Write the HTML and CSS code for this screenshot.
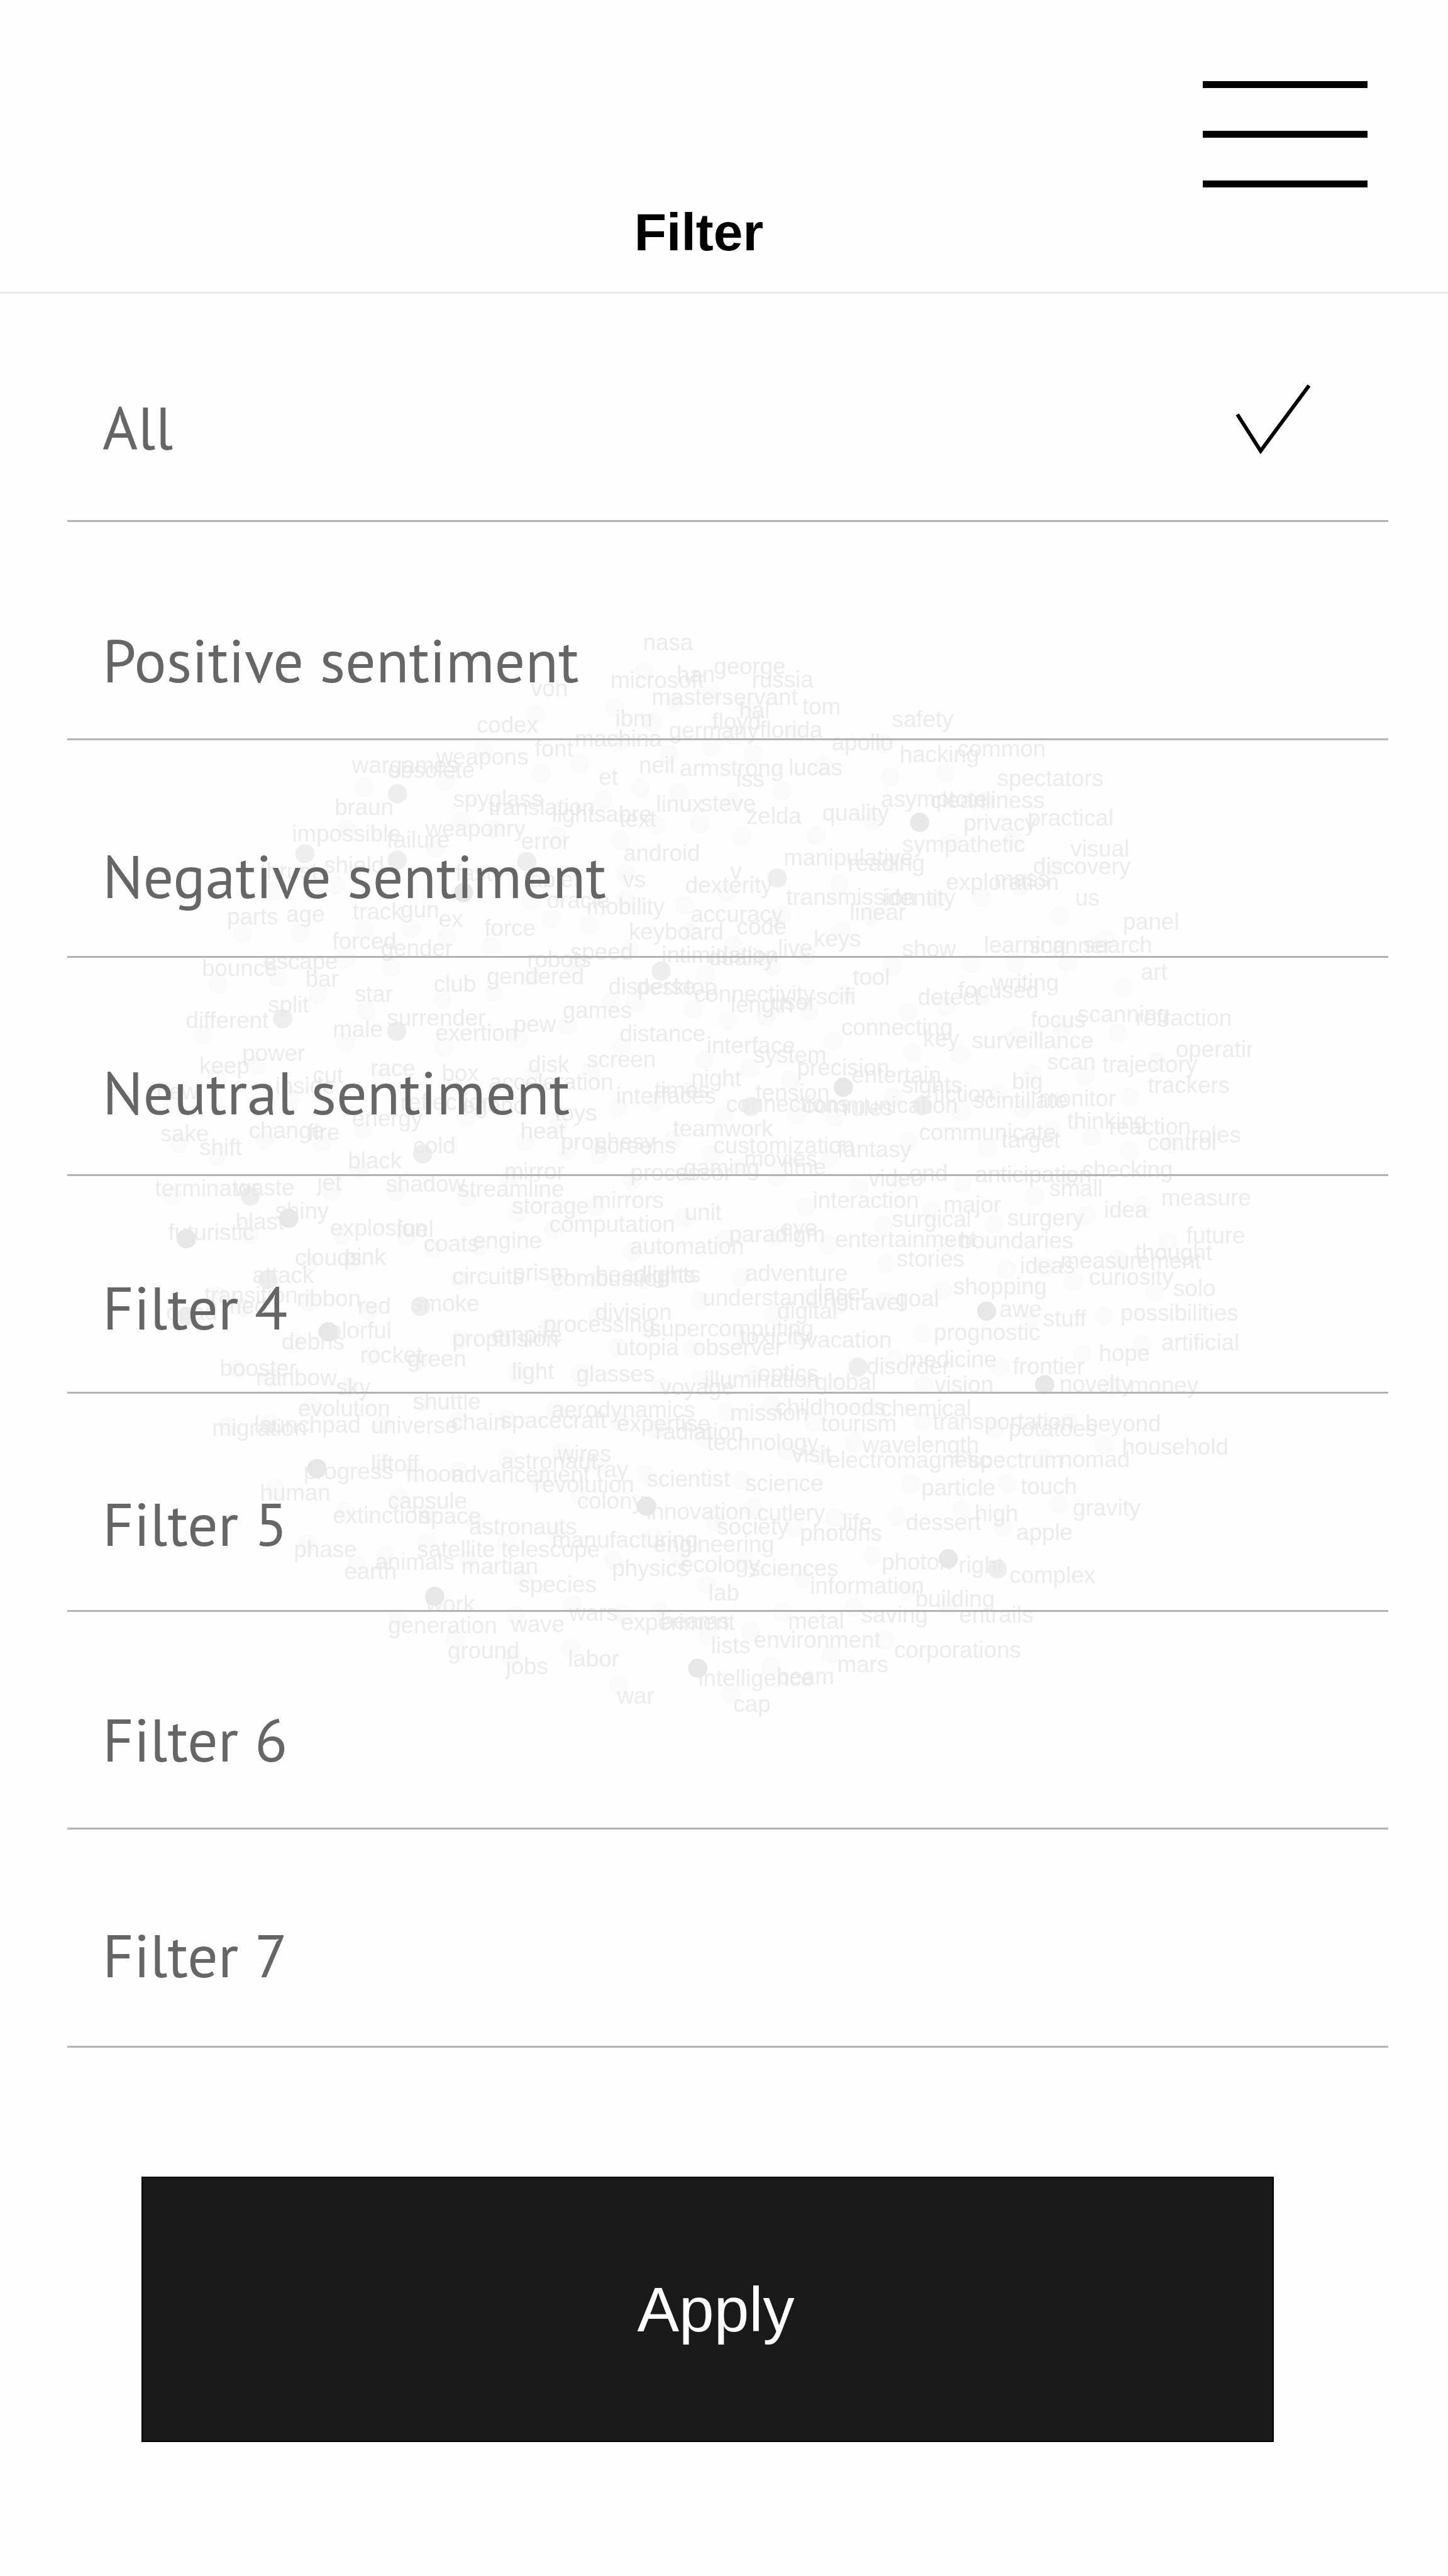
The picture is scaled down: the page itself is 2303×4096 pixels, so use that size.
FILE: index.html
```html
<!DOCTYPE html>
<html lang="en">
<head>
<meta charset="utf-8">
<meta name="viewport" content="width=device-width, initial-scale=1">
<title>Filter</title>
<link rel="stylesheet" href="styles.css">
</head>
<body>
<div class="screen">
  <svg class="cloud" viewBox="0 0 4614 4610" aria-hidden="true"></svg>

  <header class="header">
    <button class="menu" type="button" aria-label="Menu">
      <span class="menu-bar"></span>
      <span class="menu-bar"></span>
      <span class="menu-bar"></span>
    </button>
    <h1 class="title">Filter</h1>
  </header>

  <form class="filters">
    <div class="options">
      <label class="option"><span class="option-name">All</span><span class="mark"><input class="mark-input" type="radio" name="filter" checked><svg class="tick" viewBox="0 0 120 112" aria-hidden="true"><path d="M3 48 40 106 117 2"/></svg></span></label>
      <label class="option"><span class="option-name">Positive sentiment</span><span class="mark"><input class="mark-input" type="radio" name="filter"><svg class="tick" viewBox="0 0 120 112" aria-hidden="true"><path d="M3 48 40 106 117 2"/></svg></span></label>
      <label class="option"><span class="option-name">Negative sentiment</span><span class="mark"><input class="mark-input" type="radio" name="filter"><svg class="tick" viewBox="0 0 120 112" aria-hidden="true"><path d="M3 48 40 106 117 2"/></svg></span></label>
      <label class="option"><span class="option-name">Neutral sentiment</span><span class="mark"><input class="mark-input" type="radio" name="filter"><svg class="tick" viewBox="0 0 120 112" aria-hidden="true"><path d="M3 48 40 106 117 2"/></svg></span></label>
      <label class="option"><span class="option-name">Filter 4</span><span class="mark"><input class="mark-input" type="radio" name="filter"><svg class="tick" viewBox="0 0 120 112" aria-hidden="true"><path d="M3 48 40 106 117 2"/></svg></span></label>
      <label class="option"><span class="option-name">Filter 5</span><span class="mark"><input class="mark-input" type="radio" name="filter"><svg class="tick" viewBox="0 0 120 112" aria-hidden="true"><path d="M3 48 40 106 117 2"/></svg></span></label>
      <label class="option"><span class="option-name">Filter 6</span><span class="mark"><input class="mark-input" type="radio" name="filter"><svg class="tick" viewBox="0 0 120 112" aria-hidden="true"><path d="M3 48 40 106 117 2"/></svg></span></label>
      <label class="option"><span class="option-name">Filter 7</span><span class="mark"><input class="mark-input" type="radio" name="filter"><svg class="tick" viewBox="0 0 120 112" aria-hidden="true"><path d="M3 48 40 106 117 2"/></svg></span></label>
    </div>
    <button class="apply" type="button">Apply</button>
  </form>
</div>
<script src="cloud.js"></script>
</body>
</html>
```

FILE: styles.css
```css
* {
  box-sizing: border-box;
}

body {
  margin: 0;
  background: #fefefe;
  font-family: "Liberation Sans", Arial, sans-serif;
}

.screen {
  position: relative;
  min-height: 100vh;
}

/* Word cloud lying behind the list */
.cloud {
  position: absolute;
  z-index: 0;
  top: 984px;
  left: 9.9%;
  width: 76.6%;
  overflow: hidden;
  pointer-events: none;
}

.cloud-word {
  fill: #e8e8e8;
  fill-opacity: 0.8;
  font-family: "Liberation Sans", Arial, sans-serif;
  font-size: 96px;
}

.cloud-dot { fill: #fafafa; }
.cloud-dot.mid { fill: #eeeeee; }
.cloud-dot.dark { fill: #e7e7e7; }

.header {
  position: relative;
  display: flex;
  flex-direction: column;
  height: 467px;
  padding-top: 129px;
  border-bottom: 3px solid #e6e6e6;
}

.menu {
  display: flex;
  flex-direction: column;
  align-self: flex-end;
  gap: 68px;
  width: 262px;
  margin-right: 128px;
  padding: 0;
  border: 0;
  background: none;
}

.menu-bar {
  height: 11px;
  background: #000;
}

.title {
  margin: 23px 80px 0 0;
  color: #000;
  font-size: 84px;
  font-weight: 700;
  line-height: 96px;
  text-align: center;
}

.filters {
  position: relative;
  z-index: 1;
}

.options {
  display: flex;
  flex-direction: column;
  margin: 0 95px 0 107px;
}

.option {
  --lift: 65px;
  display: flex;
  align-items: flex-end;
  justify-content: space-between;
  height: 346px;
  padding: 0 123px var(--lift) 56px;
  border-bottom: 3px solid #b3b3b3;
}

.option:nth-child(even) { height: 347px; }
.option:nth-child(1) { --lift: 88px; height: 363px; }
.option:nth-child(3) { --lift: 68px; }
.option:nth-child(4) { --lift: 71px; }
.option:nth-child(5) { --lift: 75px; }
.option:nth-child(6) { --lift: 78px; }
.option:nth-child(7) { --lift: 81px; }
.option:nth-child(8) { --lift: 85px; }

.option-name {
  color: #666;
  font-family: "PT Sans", Lato, sans-serif;
  font-size: 96px;
  line-height: 120px;
}

.mark {
  display: grid;
  width: 120px;
  height: 112px;
  margin-bottom: 16px;
}

.mark-input,
.tick {
  grid-area: 1 / 1;
  width: 120px;
  height: 112px;
  margin: 0;
}

.mark-input {
  appearance: none;
}

.tick {
  visibility: hidden;
  fill: none;
  stroke: #000;
  stroke-width: 6;
}

.mark-input:checked + .tick {
  visibility: visible;
}

.apply {
  display: block;
  width: 78.2%;
  height: 422px;
  margin: 205px 0 213px 225px;
  padding: 0 0 0 26px;
  border: 2px solid #000;
  background: #1a1a1a;
  color: #fff;
  font-family: inherit;
  font-size: 100px;
  text-align: center;
}
```

FILE: cloud.js
```js
// Word cloud data, in sectors. Each sector: origin, words (name x y), dots (x y).
const sectors = [
  { at: [0, 0],
    words: "codex 1388 474,weapons 1220 607,wargames 870 640,obsolete 1018 662,braun 797 817,spyglass 1290 783,translation 1437 817,impossible 620 925,failure 1015 952,weaponry 1175 905,shield 753 1057,thrust 487 1083,fast 1300 1090,parts 350 1270,age 596 1261,track 873 1249,gun 1072 1242,ex 1230 1282,force 1420 1318,forced 788 1373,gender 990 1403,bounce 245 1485,escape 502 1457,bar 676 1529,club 1210 1550,gendered 1430 1519",
    light: "1416 545,918 700,1256 676,843 873,1323 843,1461 876,1214 957,800 1108,541 1130,412 1309,652 1307,919 1294,1113 1288,1262 1324,1447 1360,839 1415,1031 1448,562 1492,311 1520",
    mid: "1057 727,672 977,1056 1004",
    dark: "1332 1138" },
  { at: [1568, 0],
    words: "nasa 512 132,microsoft 377 289,han 652 265,george 807 229,russia 965 286,von 45 322,masterservant 548 358,hal 912 414,tom 1175 398,ibm 397 446,floyd 800 460,germany 620 497,florida 998 494,machina 228 531,apollo 1297 547,font 62 573,neil 495 640,armstrong 665 655,iss 900 698,lucas 1118 652,et 328 690,linux 567 803,steve 753 800,lightsabre 133 844,text 413 867,zelda 942 852,quality 1258 839,error 5 956,android 430 1008,v 875 1083,manipulative 1097 1025,reading 1365 1048,dexterity 688 1141,vs 428 1118,tablet 15 1117,transmission 1108 1190,identity 1508 1192,linear 1372 1253,oracle 112 1204,mobility 277 1228,accuracy 710 1261,code 902 1312,keyboard 453 1333,keys 1222 1362,live 1073 1402,speed 210 1418,intimidation 590 1430,duality 785 1441,robots 30 1450,tool 1385 1522,asymptote 1502 782",
    light: "515 218,797 312,391 370,642 348,550 431,942 368,64 397,1147 475,892 486,407 515,618 565,791 532,969 564,1513 522,245 601,87 643,1262 612,1540 658,498 704,660 721,1089 715,881 761,343 754,746 853,564 859,1465 841,151 903,923 904,1229 901,418 923,437 1060,860 1135,1327 1104,436 1168,685 1192,43 1170,1085 1234,1461 1235,130 1248,288 1273,705 1302,1336 1297,455 1373,884 1358,1190 1400,1048 1443,772 1479,222 1450,50 1485,1547 1445",
    mid: "27 1010,1069 1078,586 1465",
    dark: "" },
  { at: [3073, 0],
    words: "safety 43 450,hacking 75 596,common 315 574,spectators 480 695,cleanliness 203 788,privacy 340 881,practical 607 860,sympathetic 85 971,visual 785 989,discovery 630 1063,mass 468 1114,exploration 268 1126,us 805 1192,panel 1003 1293,learning 425 1390,scanner 613 1392,search 838 1389,show 85 1404,art 1077 1500,writing 460 1545",
    light: "264 642,431 757,289 931,551 916,45 1022,723 1038,573 1110,413 1158,224 1168,737 1237,928 1334,371 1432,554 1432,773 1424,1003 1534",
    mid: "",
    dark: "156 846" },
  { at: [0, 1505],
    words: "star 880 88,split 520 132,different 178 197,surrender 1015 186,male 790 234,exertion 1217 250,power 413 334,keep 235 386,race 947 397,cut 706 424,box 1243 418,inside 550 469,new 55 492,acceleration 1440 453,reflection 1072 538,legend 1307 550,energy 870 607,sake 72 668,change 440 655,fire 685 662,shift 235 727,cold 1125 717,black 853 780,mirror 1503 826,shadow 1010 877,jet 725 872,terminator 50 896,waste 380 894,streamline 1310 899,shiny 550 989,blast 385 1035,futuristic 105 1080,storage 1535 968,explosion 778 1060,fuel 1055 1067,coats 1168 1126,engine 1372 1112,clouds 632 1183,pink 835 1181,attack 455 1258,circuits 1287 1261,transition 255 1341,ribbon 640 1355,red 893 1385,smoke 1117 1375,dead 97 1412,med 331 1385,colorful 725 1486,debris 577 1533,propulsion 1287 1520,empire 1452 1506",
    light: "726 58,928 122,1244 78,1458 47,248 225,840 257,1251 275,1560 240,474 354,305 405,990 413,610 485,120 510,1280 450,1340 570,915 620,146 676,504 663,742 672,305 731,900 783,123 896,783 874,1049 877,1343 902,1525 820,1555 965,445 1058,828 1058,1094 1062,1204 1114,1396 1106,687 1170,874 1170,1318 1245,305 1310,691 1337,935 1370,415 1360,1317 1493,1485 1485,633 1510",
    mid: "580 158,1054 210,1162 720,445 896,518 1244,180 1395,1153 1354",
    dark: "605 988,179 1073,770 1460" },
  { at: [1568, 1505],
    words: "disperse 368 57,desktop 485 60,connectivity 725 88,scifi 1232 97,length 877 132,user 1045 122,games 178 157,pew -26 214,distance 415 253,interface 777 302,connecting 1337 226,system 972 342,precision 1153 394,entertain 1380 424,disk 35 382,screen 278 361,night 713 438,times 560 487,interfaces 400 511,tension 980 499,connections 858 545,communication 1178 550,rules 1345 560,toys 145 582,heat 2 658,teamwork 637 647,prophesy 170 703,screens 315 719,customization 805 719,fantasy 1320 735,movies 933 774,time 1093 807,processor 460 831,gaming 682 810,mirrors 300 945,video 1450 853,unit 685 996,interaction 1218 945,computation 123 1045,paradigm 870 1088,eye 1083 1062,automation 458 1137,entertainment 1312 1109,prism -30 1246,combustion 133 1270,headlights 315 1255,lights 508 1258,adventure 937 1249,understanding 760 1351,laser 1240 1329,travel 1366 1369,digital 1070 1406,division 313 1412,processing 98 1462,supercomputing 540 1480,toxicity 915 1512,vacation 1190 1526,utopia 400 1557,observer 720 1559",
    light: "378 90,481 90,720 120,862 165,1022 150,1200 127,1343 50,197 185,422 278,765 327,955 363,1302 250,55 400,292 380,1123 413,705 460,405 527,563 505,847 560,1150 557,1307 567,1550 485,157 598,635 660,20 668,190 706,327 724,793 723,1287 740,915 778,1067 815,465 830,670 810,1408 857,315 940,677 987,1186 940,140 1036,850 1075,1060 1063,1280 1099,465 1127,1510 1017,1525 1177,920 1232,150 1252,315 1245,512 1245,752 1331,1205 1322,1325 1348,1050 1386,1520 1333,322 1394,118 1440,543 1452,905 1487,1150 1497,405 1527,715 1533",
    mid: "960 523",
    dark: "1344 443" },
  { at: [3073, 1505],
    words: "detect 150 100,focused 318 73,focus 620 196,scanning 815 172,refraction 1057 188,key 173 274,surveillance 375 281,operating 1223 318,scan 688 371,trajectory 918 380,trackers 1107 466,big 542 451,sights 85 466,fiction 215 503,scintillate 380 531,monitor 655 523,thinking 772 615,reaction 945 640,roles 1287 674,control 1105 704,communicate 155 662,target 498 695,checking 833 818,end 115 832,anticipation 388 839,small 697 896,measure 1163 936,major 257 963,idea 925 985,surgical 43 1025,surgery 523 1018,boundaries 323 1112,future 1267 1092,stories 62 1189,thought 1055 1164,measurement 743 1197,ideas 575 1217,curiosity 863 1265,solo 1213 1313,shopping 298 1305,goal 58 1354,awe 490 1397,stuff 672 1437,possibilities 993 1413,prognostic 217 1494,artificial 1163 1536",
    light: "407 68,268 107,108 132,560 227,747 196,981 218,127 299,325 307,1145 337,624 390,847 395,485 470,1030 484,327 543,588 533,705 622,871 649,1203 680,438 697,1028 707,110 668,72 830,333 840,770 825,633 895,1084 935,205 960,851 978,464 1010,272 1100,1188 1085,980 1157,680 1189,517 1201,793 1250,1134 1295,250 1288,919 1394,609 1417,167 1469,1085 1512",
    mid: "168 520",
    dark: "435 1374" },
  { at: [0, 3042],
    words: "rocket 903 52,green 1100 69,light 1535 119,booster 320 106,rainbow 470 147,sky 803 186,shuttle 1123 247,evolution 645 275,migration 288 355,launchpad 463 343,universe 948 346,chain 1282 331,spacecraft 1487 323,progress 668 536,liftoff 948 505,moon 1095 546,advancement 1283 550,astronaut 1490 494,human 487 624,capsule 1018 659,extinction 790 719,space 1150 722,astronauts 1357 767,phase 628 860,satellite 1140 860,telescope 1490 860,animals 965 913,martian 1325 932,earth 837 952,species 1562 1008,work 1178 1087,generation 1020 1178,wave 1530 1171,ground 1268 1282,jobs 1510 1346",
    light: "389 77,530 115,853 152,945 25,1150 40,1555 92,1160 215,703 237,352 317,524 303,993 310,1308 295,1512 287,995 463,1130 503,1313 503,1512 447,547 576,1063 612,840 670,1187 680,1385 715,680 805,1177 803,1510 800,1007 853,888 893,1352 872,1577 945,1061 1110,1550 1103,1297 1205,1530 1280",
    mid: "",
    dark: "722 492,1212 1023" },
  { at: [1568, 3042],
    words: "glasses 235 130,voyage 583 185,illumination 767 153,optics 990 127,global 1227 165,disorder 1442 98,aerodynamics 132 280,expertise 403 338,radiation 563 371,mission 875 293,childhoods 1063 269,chemical 1500 274,tourism 1253 338,technology 778 415,wires 157 462,visit 1132 465,wavelength 1425 427,electromagnetic 1280 490,ray 318 527,scientist 528 568,science 937 587,revolution 60 592,colony 238 659,innovation 525 703,cutlery 987 708,society 820 767,life 1342 749,photons 1165 793,manufacturing 133 822,engineering 557 840,physics 383 940,ecology 668 923,sciences 952 939,photon 1505 912,information 1207 1012,lab 785 1040,wars 205 1125,experiment 420 1165,beams 585 1158,metal 1115 1158,saving 1420 1132,lists 795 1261,environment 973 1238,labor 200 1315,intelligence 742 1397,beam 1068 1389,mars 1320 1338,war 405 1469,cap 888 1505",
    light: "250 97,585 152,757 122,970 98,1195 132,148 247,413 297,568 328,858 257,1043 230,1460 237,1220 297,768 367,172 422,1108 418,1388 382,1250 440,325 478,525 518,923 542,80 540,250 605,966 653,1308 697,810 713,1135 737,150 760,557 780,388 875,665 860,933 877,1465 853,1180 950,775 975,218 1058,425 1095,583 1088,1090 1090,1387 1070,783 1190,958 1170,210 1240,1043 1315,1292 1265,411 1394,876 1430",
    mid: "1405 70",
    dark: "525 648,738 1322" },
  { at: [3073, 3042],
    words: "medicine 95 70,hope 903 44,frontier 545 98,vision 220 175,novelty 740 173,money 1030 178,transportation 213 330,potatoes 528 358,beyond 847 336,spectrum 362 490,nomad 740 487,household 1000 435,particle 165 603,touch 578 600,high 387 711,dessert 100 749,gravity 795 689,apple 560 789,right 320 925,complex 532 968,building 140 1067,entrails 322 1133,corporations 52 1278",
    light: "50 40,490 68,172 145,955 153,832 17,168 292,470 325,777 300,925 395,672 445,325 447,119 557,521 553,332 662,62 692,733 641,503 735,97 1002,278 1067,13 1207",
    mid: "480 910",
    dark: "676 143,275 867" }
];

const DOT_RADIUS = 40;
const SIDE_BEARING = 2;
const cloud = document.querySelector(".cloud");

function add(tag, attributes, text) {
  const node = document.createElementNS("http://www.w3.org/2000/svg", tag);
  for (const name in attributes) node.setAttribute(name, attributes[name]);
  if (text) node.textContent = text;
  cloud.appendChild(node);
}

for (const shade of ["light", "mid", "dark"]) {
  for (const sector of sectors) {
    for (const dot of sector[shade].split(",").filter(Boolean)) {
      const [x, y] = dot.split(" ").map(Number);
      add("circle", { class: "cloud-dot " + shade, cx: sector.at[0] + x, cy: sector.at[1] + y, r: DOT_RADIUS });
    }
  }
}

for (const sector of sectors) {
  for (const entry of sector.words.split(",")) {
    const [word, x, y] = entry.split(" ");
    add("text", { class: "cloud-word", x: sector.at[0] + Number(x) - SIDE_BEARING, y: sector.at[1] + Number(y) }, word);
  }
}
```
